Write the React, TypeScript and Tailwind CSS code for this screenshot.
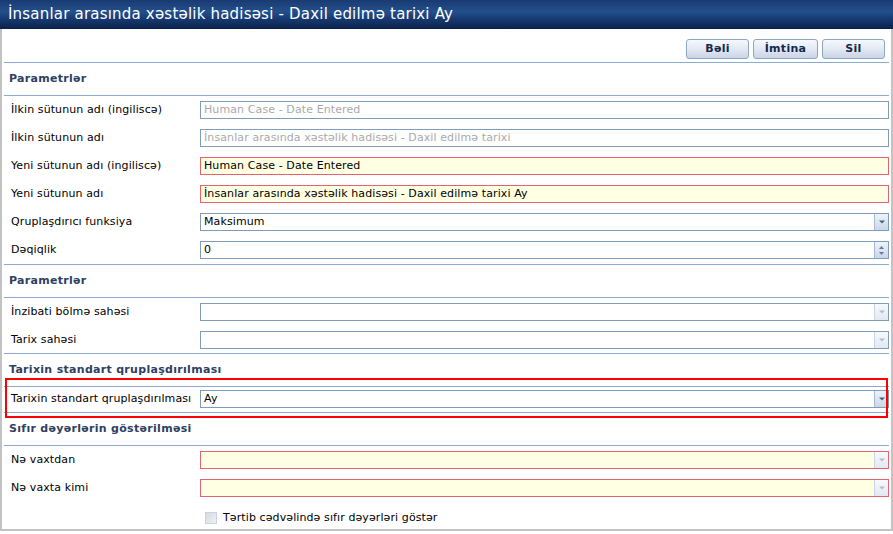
import React from "react";

type Kind = "readonly" | "required" | "normal";

const boxKind: Record<Kind, string> = {
  readonly: "border-[#7f9db9] bg-white text-[#a9a9a9]",
  required: "border-[#e3646c] bg-[#ffffe3] text-black",
  normal: "border-[#7f9db9] bg-white text-black",
};

function Arrow({ disabled }: { disabled?: boolean }) {
  return (
    <div
      className={
        "flex h-full w-[14px] shrink-0 items-center justify-center border-l " +
        (disabled
          ? "border-[#c9d5e4] bg-gradient-to-b from-[#f7f9fc] to-[#e2e9f2]"
          : "border-[#a7bbd3] bg-gradient-to-b from-[#eef3fa] to-[#c9d7ea]")
      }
    >
      <svg width="6" height="4" viewBox="0 0 6 4">
        <path d="M0 0.5h6L3 3.5z" fill={disabled ? "#b4bccb" : "#4d5d7c"} />
      </svg>
    </div>
  );
}

function Spinner() {
  return (
    <div className="flex h-full w-[14px] shrink-0 flex-col items-center justify-center gap-[3px] border-l border-[#a7bbd3] bg-gradient-to-b from-[#eef3fa] to-[#c9d7ea]">
      <svg width="5" height="3" viewBox="0 0 5 3">
        <path d="M0 3h5L2.5 0z" fill="#6a7994" />
      </svg>
      <svg width="5" height="3" viewBox="0 0 5 3">
        <path d="M0 0h5L2.5 3z" fill="#6a7994" />
      </svg>
    </div>
  );
}

function Field({
  label,
  value = "",
  kind = "normal",
  control,
  disabled,
}: {
  label: string;
  value?: string;
  kind?: Kind;
  control?: "select" | "spin";
  disabled?: boolean;
}) {
  return (
    <div className="flex h-[18px] items-center">
      <div className="w-[196px] shrink-0 pl-[7px] text-black">{label}</div>
      <div className={"flex h-[18px] flex-1 items-center border " + boxKind[kind]}>
        <div className="flex-1 truncate pl-[3px] leading-[16px]">{value}</div>
        {control === "select" && <Arrow disabled={disabled} />}
        {control === "spin" && <Spinner />}
      </div>
    </div>
  );
}

function Line() {
  return <div className="h-px bg-[#8eaad0]" />;
}

function Header({ children }: { children: React.ReactNode }) {
  return (
    <div className="flex h-[32px] items-center pl-[5px] font-bold tracking-[0.3px] text-[#2f405f]">
      {children}
    </div>
  );
}

function Btn({ children, w }: { children: React.ReactNode; w: string }) {
  return (
    <button
      className={
        w +
        " h-[20px] rounded-[3px] border border-[#8ea6c6] bg-gradient-to-b from-[#f6f8fc] via-[#e3e9f3] to-[#c9d4e6] text-[11px] font-bold tracking-[0.3px] text-[#14284b]"
      }
    >
      {children}
    </button>
  );
}

export default function App() {
  return (
    <div
      className="relative h-[534px] w-[893px] bg-white text-[11px] tracking-[0.1px]"
      style={{ fontFamily: '"DejaVu Sans", Verdana, sans-serif' }}
    >
      <div className="flex h-[29px] items-center bg-[linear-gradient(to_bottom,#1a3a72_0%,#23508b_40%,#163a72_65%,#0b2249_100%)] pl-[8px] text-[15px] tracking-[0.2px] text-white">
        İnsanlar arasında xəstəlik hadisəsi - Daxil edilmə tarixi Ay
      </div>

      <div className="flex h-[502px] flex-col border-x-2 border-b-2 border-[#c3c3c3] pl-[2px] pr-[2px]">
        <div className="flex justify-end gap-[4px] pt-[10px] pb-[3px] pr-[4px]">
          <Btn w="w-[63px]">Bəli</Btn>
          <Btn w="w-[65px]">İmtina</Btn>
          <Btn w="w-[63px]">Sil</Btn>
        </div>
        <Line />
        <Header>Parametrlər</Header>
        <Line />
        <div className="flex flex-col gap-[10px] py-[5px]">
          <Field label="İlkin sütunun adı (ingiliscə)" value="Human Case - Date Entered" kind="readonly" />
          <Field
            label="İlkin sütunun adı"
            value="İnsanlar arasında xəstəlik hadisəsi - Daxil edilmə tarixi"
            kind="readonly"
          />
          <Field label="Yeni sütunun adı (ingiliscə)" value="Human Case - Date Entered" kind="required" />
          <Field
            label="Yeni sütunun adı"
            value="İnsanlar arasında xəstəlik hadisəsi - Daxil edilmə tarixi Ay"
            kind="required"
          />
          <Field label="Qruplaşdırıcı funksiya" value="Maksimum" control="select" />
          <Field label="Dəqiqlik" value="0" control="spin" />
        </div>
        <Line />
        <Header>Parametrlər</Header>
        <Line />
        <div className="flex flex-col gap-[10px] pt-[5px] pb-[4px]">
          <Field label="İnzibati bölmə sahəsi" control="select" disabled />
          <Field label="Tarix sahəsi" control="select" disabled />
        </div>
        <Line />
        <Header>Tarixin standart qruplaşdırılması</Header>
        <Line />
        <div className="pt-[3px] pb-[4px]">
          <Field label="Tarixin standart qruplaşdırılması" value="Ay" control="select" />
        </div>
        <Line />
        <Header>Sıfır dəyərlərin göstərilməsi</Header>
        <Line />
        <div className="flex flex-col gap-[10px] pt-[5px]">
          <Field label="Nə vaxtdan" kind="required" control="select" disabled />
          <Field label="Nə vaxta kimi" kind="required" control="select" disabled />
        </div>
        <div className="flex items-center gap-[6px] pl-[201px] pt-[13px]">
          <div className="h-[12px] w-[12px] border border-[#c5d3e4] bg-gradient-to-br from-[#d6dbe2] to-[#eef0f3]" />
          <span className="text-black">Tərtib cədvəlində sıfır dəyərləri göstər</span>
        </div>
      </div>

      <div className="pointer-events-none absolute left-[5px] top-[378px] h-[40px] w-[883px] border-2 border-[#ff0000]" />
    </div>
  );
}
